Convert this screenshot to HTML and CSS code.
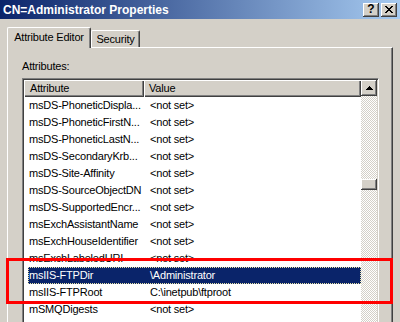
FILE: index.html
```html
<!DOCTYPE html>
<html>
<head>
<meta charset="utf-8">
<title>CN=Administrator Properties</title>
<link rel="stylesheet" href="styles.css">
</head>
<body>
<div class="window">
  <div class="titlebar">
    <span class="title">CN=Administrator Properties</span>
    <div class="capbtn help"><span>?</span></div>
    <div class="capbtn close">
      <svg width="8" height="7" viewBox="0 0 8 7"><path d="M0 0h2v1h-2zM6 0h2v1h-2zM1 1h2v1h-2zM5 1h2v1h-2zM2 2h4v1h-4zM3 3h2v1h-2zM2 4h4v1h-4zM1 5h2v1h-2zM5 5h2v1h-2zM0 6h2v1h-2zM6 6h2v1h-2z" fill="#000"/></svg>
    </div>
  </div>
  <div class="content">
    <div class="tabs">
      <div class="tab active">Attribute Editor</div>
      <div class="tab">Security</div>
    </div>
    <div class="panel">
      <div class="label">Attributes:</div>
      <div class="listbox">
        <div class="listmain">
          <div class="header">
            <div class="hcell hattr">Attribute</div>
            <div class="hcell hval">Value</div>
          </div>
          <div class="row"><span class="c1">msDS-PhoneticDispla...</span><span class="c2">&lt;not set&gt;</span></div>
          <div class="row"><span class="c1">msDS-PhoneticFirstN...</span><span class="c2">&lt;not set&gt;</span></div>
          <div class="row"><span class="c1">msDS-PhoneticLastN...</span><span class="c2">&lt;not set&gt;</span></div>
          <div class="row"><span class="c1">msDS-SecondaryKrb...</span><span class="c2">&lt;not set&gt;</span></div>
          <div class="row"><span class="c1">msDS-Site-Affinity</span><span class="c2">&lt;not set&gt;</span></div>
          <div class="row"><span class="c1">msDS-SourceObjectDN</span><span class="c2">&lt;not set&gt;</span></div>
          <div class="row"><span class="c1">msDS-SupportedEncr...</span><span class="c2">&lt;not set&gt;</span></div>
          <div class="row"><span class="c1">msExchAssistantName</span><span class="c2">&lt;not set&gt;</span></div>
          <div class="row"><span class="c1">msExchHouseIdentifier</span><span class="c2">&lt;not set&gt;</span></div>
          <div class="row"><span class="c1">msExchLabeledURI</span><span class="c2">&lt;not set&gt;</span></div>
          <div class="row selected"><span class="c1">msIIS-FTPDir</span><span class="c2">\Administrator</span></div>
          <div class="row"><span class="c1">msIIS-FTPRoot</span><span class="c2">C:\inetpub\ftproot</span></div>
          <div class="row"><span class="c1">mSMQDigests</span><span class="c2">&lt;not set&gt;</span></div>
        </div>
        <div class="vscroll">
          <div class="sbtn">
            <svg width="7" height="4" viewBox="0 0 7 4"><path d="M3 0h1v1h1v1h1v1h1v1h-7v-1h1v-1h1v-1h1z" fill="#000"/></svg>
          </div>
          <div class="track">
            <div class="thumb"></div>
          </div>
        </div>
      </div>
    </div>
  </div>
  <div class="highlight"></div>
</div>
</body>
</html>
```
FILE: styles.css
```css
* { box-sizing: border-box; }
body {
  margin: 0;
  font-family: "Liberation Sans", Arial, sans-serif;
  font-size: 11px;
  color: #000;
  background: #D4D0C8;
}
.window {
  position: relative;
  width: 400px;
  height: 322px;
  overflow: hidden;
  background: #D4D0C8;
  display: flex;
  flex-direction: column;
}
.titlebar {
  height: 19px;
  flex: none;
  display: flex;
  align-items: center;
  padding: 0 3px;
  background: linear-gradient(to right, #0A246A, #A6CAF0);
}
.title {
  flex: 1;
  color: #fff;
  font-weight: bold;
  font-size: 12px;
  white-space: nowrap;
}
.capbtn {
  width: 16px;
  height: 14px;
  background: #D4D0C8;
  box-shadow: inset -1px -1px #404040, inset 1px 1px #fff, inset -2px -2px #808080;
  display: flex;
  align-items: center;
  justify-content: center;
}
.capbtn + .capbtn { margin-left: 2px; }
.help span {
  font-weight: bold;
  font-size: 12px;
  line-height: 12px;
  margin-top: -1px;
}
.close svg { margin-top: -1px; }
.content {
  flex: 1;
  display: flex;
  flex-direction: column;
  padding: 8px 7px 0 7px;
  min-height: 0;
}
.tabs {
  display: flex;
  align-items: flex-end;
  height: 20px;
  flex: none;
  letter-spacing: -0.2px;
}
.tab {
  height: 17px;
  padding-top: 2px;
  line-height: 13px;
  width: 49px;
  text-align: center;
  background: #D4D0C8;
  border-top: 1px solid #fff;
  border-left: 1px solid #fff;
  border-right: 1px solid #404040;
  box-shadow: inset -1px 0 #808080;
  border-radius: 2px 2px 0 0;
  white-space: nowrap;
}
.tab.active {
  width: 84px;
  height: 21px;
  padding-top: 3px;
  margin-bottom: -1px;
  position: relative;
  z-index: 1;
}
.panel {
  flex: 1;
  border-top: 1px solid #fff;
  border-left: 1px solid #fff;
  border-right: 1px solid #404040;
  box-shadow: inset -1px 0 #808080;
  padding: 12px 12px 0 14px;
  min-height: 0;
}
.label {
  line-height: 13px;
  margin-bottom: 5px;
  letter-spacing: -0.2px;
}
.listbox {
  width: 357px;
  height: 260px;
  border-top: 1px solid #808080;
  border-left: 1px solid #808080;
  border-right: 1px solid #fff;
  box-shadow: inset 1px 1px #404040, inset -1px 0 #D4D0C8;
  padding: 1px 1px 0 1px;
  display: flex;
  background: #fff;
  letter-spacing: -0.2px;
}
.listmain {
  flex: 1;
  display: flex;
  flex-direction: column;
}
.header {
  display: flex;
  height: 17px;
  flex: none;
}
.hcell {
  background: #D4D0C8;
  line-height: 16px;
  box-shadow: inset 1px 1px #fff, inset -1px -1px #404040, inset -2px -2px #808080;
  white-space: nowrap;
}
.hattr { width: 120px; padding-left: 6px; }
.hval { flex: 1; padding-left: 5px; }
.row {
  display: flex;
  height: 17px;
  line-height: 17px;
  margin-left: 4px;
  white-space: nowrap;
  flex: none;
}
.c1 { width: 116px; padding-left: 1px; overflow: hidden; }
.c2 { flex: 1; padding-left: 6px; }
.row.selected {
  background: #0A246A;
  color: #fff;
  outline: 1px dotted #E8E4A8;
  outline-offset: -1px;
}
.vscroll {
  width: 16px;
  flex: none;
  display: flex;
  flex-direction: column;
}
.sbtn {
  height: 16px;
  flex: none;
  background: #D4D0C8;
  box-shadow: inset -1px -1px #404040, inset 1px 1px #fff, inset -2px -2px #808080;
  display: flex;
  align-items: center;
  justify-content: center;
}
.track {
  flex: 1;
  background-color: #fff;
  background-image: repeating-conic-gradient(#D4D0C8 0 25%, #fff 0 50%);
  background-size: 2px 2px;
}
.thumb {
  margin-top: 83px;
  height: 11px;
  background: #D4D0C8;
  box-shadow: inset -1px -1px #404040, inset 1px 1px #fff, inset -2px -2px #808080;
}
.highlight {
  position: absolute;
  left: 6px;
  top: 258px;
  width: 387px;
  height: 46px;
  border: 3px solid #FF0000;
  z-index: 5;
}
```
